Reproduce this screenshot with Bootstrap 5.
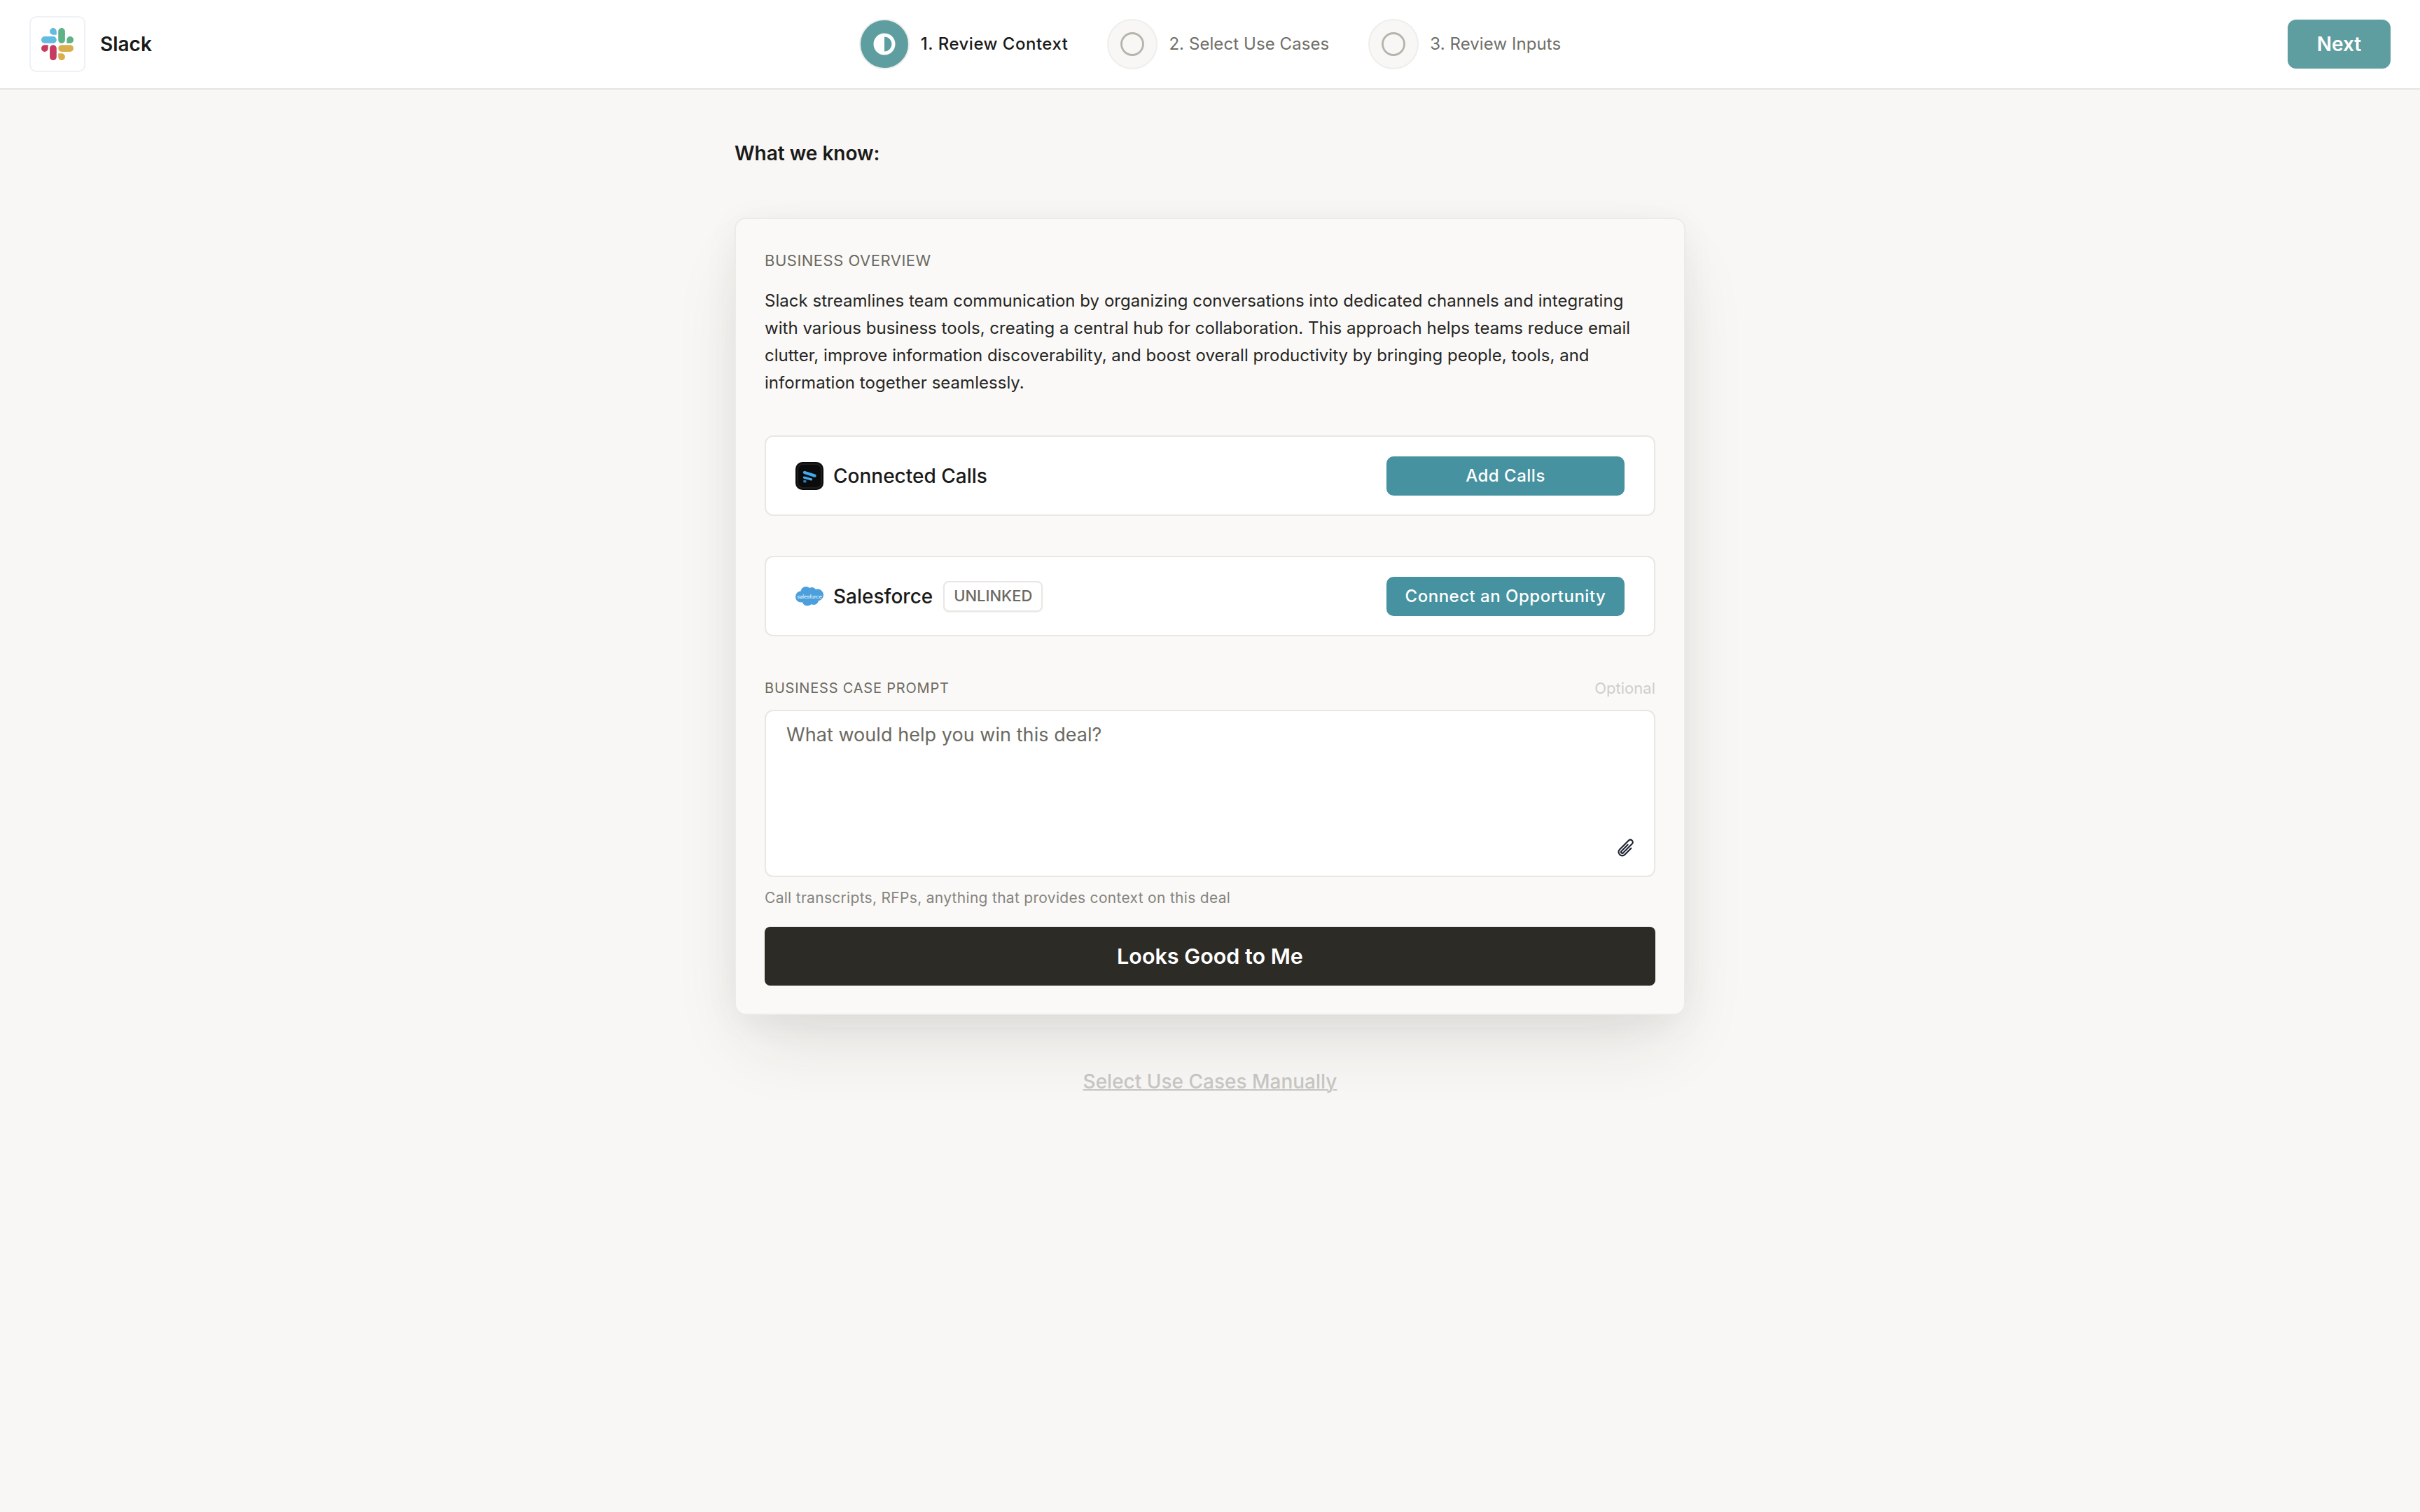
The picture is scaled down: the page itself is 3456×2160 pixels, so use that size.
<!DOCTYPE html>
<html lang="en">
<head>
<meta charset="UTF-8">
<meta name="viewport" content="width=device-width, initial-scale=1.0">
<title>Slack - Review Context</title>
<link href="https://cdn.jsdelivr.net/npm/bootstrap@5.3.0/dist/css/bootstrap.min.css" rel="stylesheet">
<style>
  body {
    font-family: Inter, "Liberation Sans", sans-serif;
    background-color: #f8f7f5;
    color: #1a1a18;
    min-height: 100vh;
  }
  /* header */
  .top-bar {
    height: 128px;
    padding: 0 42px;
    background: #fff;
    border-bottom: 2px solid #e6e5e0;
  }
  .top-side { flex: 1 1 0; }
  .logo-box {
    width: 80px;
    height: 80px;
    border: 2px solid #eef1f5;
    border-radius: 10px;
    background: #fff;
  }
  .logo-box svg { width: 46px; height: 46px; }
  .company-name { font-size: 28px; font-weight: 600; margin-left: 21px; }
  .step-list { gap: 56px; }
  .step-item { gap: 16px; font-size: 24px; letter-spacing: .08px; color: #6f6e68; }
  .step-item.is-active { color: #1a1a18; font-weight: 500; letter-spacing: .5px; }
  .step-dot {
    width: 72px;
    height: 72px;
    border: 2px solid #efeeeb;
    border-radius: 50%;
    background: #f8f7f5;
  }
  .is-active .step-dot { background: #5f9ea0; }
  .step-dot svg { width: 36px; height: 36px; }
  .btn-next {
    width: 147px;
    height: 70px;
    padding: 0;
    font-size: 28px;
    font-weight: 600;
    color: #fff;
    background-color: #5f9ea0;
    border: 0;
    border-radius: 12px;
  }
  /* main column */
  .know-col { width: 1358px; }
  .know-title {
    font-size: 28px;
    line-height: 34px;
    font-weight: 600;
    margin: 74px 0 75px;
  }
  .know-card {
    background: #faf9f7;
    border: 2px solid #ecebe8;
    border-radius: 16px;
    padding: 45px 41px 40px;
    box-shadow: 0 50px 100px -20px rgba(40, 38, 30, .12), 0 8px 50px rgba(40, 38, 30, .05);
  }
  .field-label {
    font-size: 22px;
    line-height: 28px;
    letter-spacing: .5px;
    color: #6b6a62;
  }
  .prompt-label { font-size: 20px; letter-spacing: .8px; }
  .overview-text {
    font-size: 24px;
    line-height: 39px;
    letter-spacing: .03px;
    color: #262624;
    margin: 24px 0 56px;
  }
  .link-row {
    height: 115px;
    padding: 0 42px;
    background: #fff;
    border: 2px solid #e8e7e3;
    border-radius: 12px;
  }
  .row-gap { margin-bottom: 57px; }
  .row-gap-last { margin-bottom: 60px; }
  .row-title { font-size: 28px; font-weight: 500; margin-left: 14px; }
  .row-icon { width: 40px; height: 40px; flex: none; }
  .status-chip {
    height: 44px;
    width: 142px;
    margin-left: 15px;
    font-size: 22px;
    font-weight: 500;
    color: #6b6a62;
    background: #fff;
    border: 2px solid #e8e7e3;
    border-radius: 8px;
    box-shadow: 0 1px 2px rgba(0, 0, 0, .06);
  }
  .btn-row {
    width: 340px;
    height: 56px;
    padding: 0;
    font-size: 24px;
    font-weight: 500;
    letter-spacing: .5px;
    color: #fff;
    background-color: #4692a0;
    border: 0;
    border-radius: 10px;
  }
  .optional-note { font-size: 22px; line-height: 28px; color: #cfcec9; }
  .prompt-wrap { margin-top: 17px; }
  .prompt-box {
    height: 239px;
    padding: 17px 29px 15px;
    font-size: 27px;
    line-height: 34px;
    letter-spacing: .05px;
    border: 2px solid #e8e7e3;
    border-radius: 12px;
    resize: none;
  }
  .prompt-box::placeholder { color: #6b6a62; opacity: 1; }
  .clip-icon {
    position: absolute;
    right: 28px;
    bottom: 28px;
    width: 28px;
    height: 28px;
  }
  .helper-text {
    font-size: 21px;
    line-height: 28px;
    letter-spacing: .3px;
    color: #85847e;
    margin: 16px 0 27px;
  }
  .btn-confirm {
    height: 84px;
    padding: 0;
    font-size: 30.5px;
    font-weight: 600;
    color: #fff;
    background-color: #2d2b26;
    border: 0;
    border-radius: 8px;
  }
  .manual-link {
    display: block;
    margin-top: 78px;
    font-size: 28px;
    line-height: 34px;
    font-weight: 500;
    text-align: center;
    color: #c8c7c3;
    text-decoration-thickness: 2px;
  }
</style>
</head>
<body>

<header class="top-bar d-flex align-items-center">
  <div class="top-side d-flex align-items-center">
    <div class="logo-box d-flex align-items-center justify-content-center">
      <svg viewBox="0 0 122.8 122.8" aria-hidden="true">
        <path fill="#c73b60" d="M25.8 77.6c0 7.1-5.8 12.9-12.9 12.9S0 84.7 0 77.6s5.8-12.9 12.9-12.9h12.9v12.9zM32.3 77.6c0-7.1 5.8-12.9 12.9-12.9s12.9 5.8 12.9 12.9v32.3c0 7.1-5.8 12.9-12.9 12.9s-12.9-5.8-12.9-12.9V77.6z"/>
        <path fill="#63bbe0" d="M45.2 25.8c-7.1 0-12.9-5.8-12.9-12.9S38.1 0 45.2 0s12.9 5.8 12.9 12.9v12.9H45.2zM45.2 32.3c7.1 0 12.9 5.8 12.9 12.9s-5.8 12.9-12.9 12.9H12.9C5.8 58.1 0 52.3 0 45.2s5.8-12.9 12.9-12.9h32.3z"/>
        <path fill="#5fb188" d="M97 45.2c0-7.1 5.8-12.9 12.9-12.9s12.9 5.8 12.9 12.9-5.8 12.9-12.9 12.9H97V45.2zM90.5 45.2c0 7.1-5.8 12.9-12.9 12.9s-12.9-5.8-12.9-12.9V12.9C64.7 5.8 70.5 0 77.6 0s12.9 5.8 12.9 12.9v32.3z"/>
        <path fill="#d9ae4e" d="M77.6 97c7.1 0 12.9 5.8 12.9 12.9s-5.8 12.9-12.9 12.9-12.9-5.8-12.9-12.9V97h12.9zM77.6 90.5c-7.1 0-12.9-5.8-12.9-12.9s5.8-12.9 12.9-12.9h32.3c7.1 0 12.9 5.8 12.9 12.9s-5.8 12.9-12.9 12.9H77.6z"/>
      </svg>
    </div>
    <span class="company-name">Slack</span>
  </div>

  <div class="step-list d-flex align-items-center">
    <div class="step-item is-active d-flex align-items-center">
      <span class="step-dot d-flex align-items-center justify-content-center">
        <svg viewBox="0 0 36 36" aria-hidden="true">
          <circle cx="18" cy="18" r="13" fill="none" stroke="#fff" stroke-width="5"/>
          <path fill="#fff" d="M18 7a11 11 0 0 0 0 22z"/>
        </svg>
      </span>
      <span>1. Review Context</span>
    </div>
    <div class="step-item d-flex align-items-center">
      <span class="step-dot d-flex align-items-center justify-content-center">
        <svg viewBox="0 0 36 36" aria-hidden="true"><circle cx="18" cy="18" r="15.5" fill="none" stroke="#b5b3aa" stroke-width="2.8"/></svg>
      </span>
      <span>2. Select Use Cases</span>
    </div>
    <div class="step-item d-flex align-items-center">
      <span class="step-dot d-flex align-items-center justify-content-center">
        <svg viewBox="0 0 36 36" aria-hidden="true"><circle cx="18" cy="18" r="15.5" fill="none" stroke="#b5b3aa" stroke-width="2.8"/></svg>
      </span>
      <span>3. Review Inputs</span>
    </div>
  </div>

  <div class="top-side d-flex justify-content-end">
    <button type="button" class="btn btn-next">Next</button>
  </div>
</header>

<main class="know-col mx-auto">
  <h1 class="know-title">What we know:</h1>

  <section class="card know-card">
    <div class="field-label text-uppercase">Business Overview</div>
    <p class="overview-text">Slack streamlines team communication by organizing conversations into dedicated channels and integrating with various business tools, creating a central hub for collaboration. This approach helps teams reduce email clutter, improve information discoverability, and boost overall productivity by bringing people, tools, and information together seamlessly.</p>

    <div class="link-row row-gap d-flex align-items-center justify-content-between">
      <div class="d-flex align-items-center">
        <svg class="row-icon" viewBox="0 0 40 40" aria-hidden="true">
          <rect width="40" height="40" rx="10" fill="#0b0b0c"/>
          <rect x="3" y="3" width="34" height="34" rx="7.5" fill="none" stroke="#1e1e20" stroke-width="2"/>
          <path d="M13 15l14.5 4.6" stroke="#45a8ea" stroke-width="4.4" stroke-linecap="round"/>
          <path d="M12.5 22.2l10 2.6" stroke="#45a8ea" stroke-width="3.4" stroke-linecap="round"/>
          <path d="M12.8 27.6l1.2.2" stroke="#2a7cb4" stroke-width="3.6" stroke-linecap="round"/>
        </svg>
        <span class="row-title">Connected Calls</span>
      </div>
      <button type="button" class="btn btn-row">Add Calls</button>
    </div>

    <div class="link-row row-gap-last d-flex align-items-center justify-content-between">
      <div class="d-flex align-items-center">
        <svg class="row-icon" viewBox="0 0 40 40" aria-hidden="true">
          <g fill="#4a9fdc">
            <circle cx="8" cy="20.5" r="8"/>
            <circle cx="15" cy="13.5" r="7.5"/>
            <circle cx="23.5" cy="13.5" r="6.5"/>
            <circle cx="31.5" cy="18" r="8.5"/>
            <circle cx="26" cy="25" r="7"/>
            <circle cx="17" cy="26" r="7.5"/>
          </g>
          <text x="20" y="22.5" text-anchor="middle" font-family="Inter, sans-serif" font-size="7.2" fill="#fff">salesforce</text>
        </svg>
        <span class="row-title">Salesforce</span>
        <span class="status-chip d-inline-flex align-items-center justify-content-center">UNLINKED</span>
      </div>
      <button type="button" class="btn btn-row">Connect an Opportunity</button>
    </div>

    <div class="d-flex justify-content-between">
      <label class="field-label prompt-label text-uppercase" for="promptInput">Business Case Prompt</label>
      <span class="optional-note">Optional</span>
    </div>
    <div class="prompt-wrap position-relative">
      <textarea id="promptInput" class="form-control prompt-box" placeholder="What would help you win this deal?"></textarea>
      <svg class="clip-icon" viewBox="0 0 24 24" fill="none" stroke="#1c2230" stroke-width="1.8" stroke-linecap="round" stroke-linejoin="round" aria-hidden="true">
        <path d="M18.375 12.739l-7.693 7.693a4.5 4.5 0 01-6.364-6.364l10.94-10.94A3 3 0 1119.5 7.372L8.552 18.32m.009-.01l-.01.01m5.699-9.941l-7.81 7.81a1.5 1.5 0 002.112 2.13"/>
      </svg>
    </div>
    <div class="helper-text">Call transcripts, RFPs, anything that provides context on this deal</div>
    <button type="button" class="btn btn-confirm w-100">Looks Good to Me</button>
  </section>

  <a href="#" class="manual-link">Select Use Cases Manually</a>
</main>

<script src="https://cdn.jsdelivr.net/npm/bootstrap@5.3.0/dist/js/bootstrap.bundle.min.js"></script>
</body>
</html>
